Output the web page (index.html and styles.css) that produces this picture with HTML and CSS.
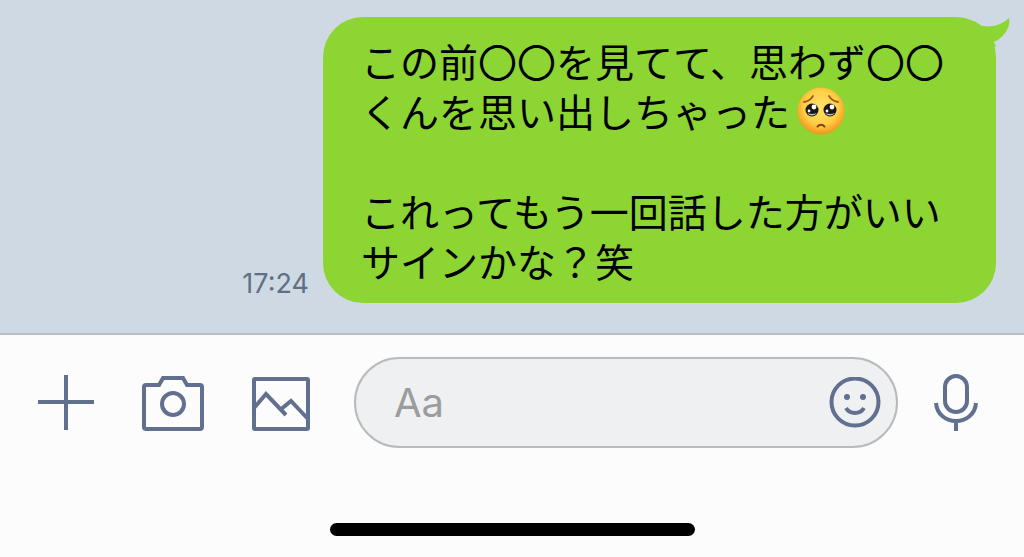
FILE: index.html
```html
<!DOCTYPE html>
<html lang="ja">
<head>
  <meta charset="UTF-8" />
  <meta name="viewport" content="width=device-width, initial-scale=1.0" />
  <title>トーク</title>
  <link rel="stylesheet" href="styles.css">
</head>
<body>

<main class="chat">
  <div class="message">
    <time class="message-time" datetime="17:24">17:24</time>
    <div class="bubble">
      <svg class="bubble-tail" viewBox="0 0 36 30" aria-hidden="true">
        <path d="M0 4C4 6 6 9 9 9C20 11 30 6 35 1C37 9 31 20 20 25L22 30L0 24Z" />
      </svg>
      <p class="bubble-text">この前〇〇を見てて、思わず〇〇<br>くんを思い出しちゃった<svg class="emoji" viewBox="0 0 50 50" role="img" aria-label="うるうるした顔">
          <defs>
            <radialGradient id="face" cx="50%" cy="42%" r="56%">
              <stop offset="0" stop-color="#ffe36a" />
              <stop offset="0.65" stop-color="#ffcf45" />
              <stop offset="1" stop-color="#f3991f" />
            </radialGradient>
          </defs>
          <circle cx="25" cy="26" r="23.5" fill="url(#face)" />
          <path d="M8 17Q14 16 17 11M33 11Q36 16 42 17" fill="none" stroke="#9a5a16" stroke-width="1.8" stroke-linecap="round" />
          <circle cx="16" cy="25" r="6.5" fill="#1d1818" />
          <circle cx="34" cy="25" r="6.5" fill="#1d1818" />
          <path d="M11 28Q16 33 21 28Q16 30 11 28M29 28Q34 33 39 28Q34 30 29 28" fill="#b9c3cb" />
          <circle cx="18" cy="22" r="2.4" fill="#fff" />
          <circle cx="36" cy="22" r="2.4" fill="#fff" />
          <circle cx="13" cy="26" r="1.4" fill="#fff" />
          <circle cx="31" cy="26" r="1.4" fill="#fff" />
          <path d="M21.500 41.500Q25 38 28.500 41.500" fill="none" stroke="#7c3f12" stroke-width="2" stroke-linecap="round" />
        </svg><br><br>これってもう一回話した方がいい<br>サインかな？笑</p>
    </div>
  </div>
</main>

<footer class="input-bar">
  <div class="toolbar">
    <button class="icon-button" type="button" aria-label="追加">
      <svg class="icon icon-plus" viewBox="0 0 56 56"><path d="M28 0V55M0 27H56" /></svg>
    </button>
    <button class="icon-button" type="button" aria-label="カメラ">
      <svg class="icon icon-camera" viewBox="0 0 62 56">
        <path d="M4 10H17L21 3H41L45 10H58Q60 10 60 12V52Q60 54 58 54H4Q2 54 2 52V12Q2 10 4 10Z" />
        <circle cx="31" cy="29" r="11" />
      </svg>
    </button>
    <button class="icon-button" type="button" aria-label="写真">
      <svg class="icon icon-photo" viewBox="0 0 58 56">
        <rect x="2" y="4" width="54" height="50" rx="1" />
        <path d="M2 33L14 19L34 40M28 35L39 26L56 44" />
      </svg>
    </button>
    <div class="field">
      <input class="field-input" type="text" placeholder="Aa" aria-label="メッセージを入力" />
      <button class="icon-button" type="button" aria-label="スタンプ">
        <svg class="icon icon-smile" viewBox="0 0 52 52">
          <circle cx="26" cy="25" r="23.500" />
          <path d="M17 31Q20 36 26 36T35 31" />
          <circle class="dot" cx="18" cy="20" r="3" />
          <circle class="dot" cx="34" cy="20" r="3" />
        </svg>
      </button>
    </div>
    <button class="icon-button" type="button" aria-label="音声">
      <svg class="icon icon-mic" viewBox="0 0 44 58">
        <rect x="11" y="2" width="22" height="36" rx="11" />
        <path d="M2 29C4 53 40 53 42 29M22 47V57" />
      </svg>
    </button>
  </div>
  <div class="home-indicator"></div>
</footer>

</body>
</html>
```
FILE: styles.css
```css
:root {
  --chat-bg: #cfd9e4;
  --bubble: #8cd532;
  --bar-bg: #fcfcfc;
  --icon: #62708f;
}

* {
  box-sizing: border-box;
}

body {
  display: flex;
  flex-direction: column;
  min-height: 100vh;
  margin: 0;
  background: var(--bar-bg);
  font-family: Inter, "Noto Sans CJK JP", sans-serif;
}

.chat {
  padding: 17px 28px 30px;
  background: var(--chat-bg);
}

.message {
  display: flex;
  justify-content: flex-end;
  align-items: flex-end;
  gap: 14px;
}

.message-time {
  padding-bottom: 4px;
  color: #5f7083;
  font-size: 27px;
  line-height: 30px;
}

.bubble {
  position: relative;
  padding: 18px 52px 18px 38px;
  background: var(--bubble);
  border-radius: 40px;
}

/* the tail hangs over the top right corner */
.bubble-tail {
  position: absolute;
  top: 0;
  right: -14px;
  width: 36px;
  height: 30px;
  fill: var(--bubble);
}

.bubble-text {
  margin: 0;
  color: #000;
  font-family: "Noto Sans CJK JP", sans-serif;
  font-size: 39px;
  line-height: 50px;
}

.emoji {
  width: 50px;
  height: 50px;
  margin-left: 6px;
  vertical-align: top;
}

.input-bar {
  display: flex;
  flex: 1;
  flex-direction: column;
  justify-content: space-between;
  align-items: center;
  padding: 22px 0 21px;
  border-top: 2px solid #bbbdc2;
}

.toolbar {
  display: flex;
  align-items: center;
  width: 100%;
  padding: 0 46px 0 38px;
}

.icon-button {
  display: flex;
  flex: none;
  margin: 0;
  padding: 0;
  background: none;
  border: none;
  cursor: pointer;
}

.toolbar > .icon-button + .icon-button {
  margin-left: 48px;
}

.icon {
  display: block;
  fill: none;
  stroke: var(--icon);
  stroke-width: 4;
}

.icon .dot {
  fill: var(--icon);
  stroke: none;
}

.icon-plus {
  width: 56px;
  height: 56px;
}

.icon-camera {
  width: 62px;
  height: 56px;
}

.icon-photo {
  width: 58px;
  height: 56px;
}

.icon-smile {
  width: 52px;
  height: 52px;
}

.icon-mic {
  width: 44px;
  height: 58px;
}

.field {
  display: flex;
  flex: 1;
  align-items: center;
  min-width: 0;
  height: 91px;
  margin: 0 36px 0 44px;
  padding: 0 15px 0 38px;
  background: #eff0f2;
  border: 2px solid #b9babb;
  border-radius: 46px;
}

.field-input {
  flex: 1;
  min-width: 0;
  padding: 0;
  background: none;
  border: none;
  outline: none;
  color: #000;
  font-family: inherit;
  font-size: 40px;
  line-height: 48px;
}

.field-input::placeholder {
  color: #9b9c9e;
  opacity: 1;
}

.home-indicator {
  width: 365px;
  max-width: 80%;
  height: 13px;
  background: #000;
  border-radius: 7px;
}
```
